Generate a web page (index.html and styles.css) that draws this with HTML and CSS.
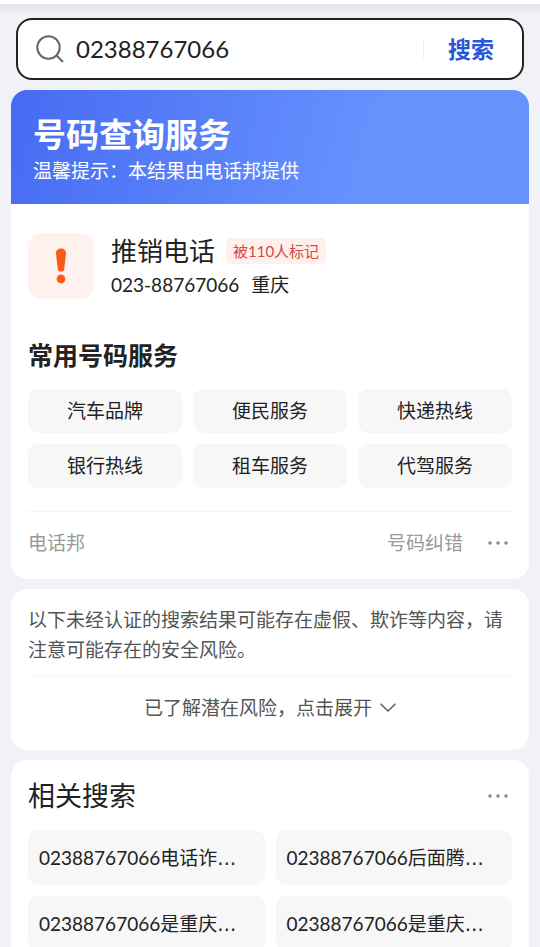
FILE: index.html
```html
<!DOCTYPE html>
<html lang="zh-CN">
<head>
<meta charset="utf-8">
<meta name="viewport" content="width=device-width, initial-scale=1">
<title>02388767066</title>
<link rel="stylesheet" href="styles.css">
</head>
<body>
<div class="page">
  <div class="topbar"></div>
  <form class="search">
    <label class="search-label" for="q" aria-label="搜索">
      <svg class="search-icon" viewBox="0 0 28 28" aria-hidden="true"><circle cx="12.500" cy="12.500" r="11.200"/><path d="M20.500 20.500l6.500 6.500"/></svg>
    </label>
    <input class="search-input" id="q" type="text" value="02388767066">
    <button class="search-button" type="button">搜索</button>
  </form>

  <main class="results">
    <section class="card">
      <header class="banner">
        <h1 class="banner-title">号码查询服务</h1>
        <p class="banner-note">温馨提示：本结果由电话邦提供</p>
      </header>
      <div class="lookup">
        <div class="caller">
          <div class="caller-icon">
            <svg viewBox="0 0 12 36" aria-hidden="true"><path d="M1 5.500C1 2 3 .5 6 .5s5 1.500 5 5L9.200 21.500Q9 23.500 6 23.500T2.800 21.500Z"/><circle cx="6" cy="31" r="4.400"/></svg>
          </div>
          <div class="caller-info">
            <div class="caller-row"><h2 class="caller-name">推销电话</h2><span class="tag">被110人标记</span></div>
            <p class="caller-number"><span>023-88767066</span><span>重庆</span></p>
          </div>
        </div>
        <h3 class="services-title">常用号码服务</h3>
        <nav class="services">
          <a class="chip" href="#">汽车品牌</a>
          <a class="chip" href="#">便民服务</a>
          <a class="chip" href="#">快递热线</a>
          <a class="chip" href="#">银行热线</a>
          <a class="chip" href="#">租车服务</a>
          <a class="chip" href="#">代驾服务</a>
        </nav>
        <footer class="source">
          <span>电话邦</span>
          <a class="report" href="#">号码纠错</a>
          <button class="more" type="button" aria-label="更多"><svg viewBox="0 0 20 4" aria-hidden="true"><circle cx="2" cy="2" r="1.700"/><circle cx="10" cy="2" r="1.700"/><circle cx="18" cy="2" r="1.700"/></svg></button>
        </footer>
      </div>
    </section>

    <section class="card warning">
      <p class="warning-text">以下未经认证的搜索结果可能存在虚假、欺诈等内容，请注意可能存在的安全风险。</p>
      <button class="expand" type="button">已了解潜在风险，点击展开<svg viewBox="0 0 16 9" aria-hidden="true"><path d="M.5.800L8 8 15.500.800"/></svg></button>
    </section>

    <section class="card related">
      <header class="related-head">
        <h2 class="related-title">相关搜索</h2>
        <button class="more" type="button" aria-label="更多"><svg viewBox="0 0 20 4" aria-hidden="true"><circle cx="2" cy="2" r="1.700"/><circle cx="10" cy="2" r="1.700"/><circle cx="18" cy="2" r="1.700"/></svg></button>
      </header>
      <nav class="related-list">
        <a class="query" href="#">02388767066电话诈<span class="dots">…</span></a>
        <a class="query" href="#">02388767066后面腾<span class="dots">…</span></a>
        <a class="query" href="#">02388767066是重庆<span class="dots">…</span></a>
        <a class="query" href="#">02388767066是重庆<span class="dots">…</span></a>
      </nav>
    </section>
  </main>
</div>
</body>
</html>
```
FILE: styles.css
```css
* { box-sizing: border-box; }

body {
  margin: 0;
  background: #f1f2f7;
  color: #222;
  font: 19px/30px Lato, "Noto Sans CJK SC", sans-serif;
}

h1, h2, h3, p { margin: 0; font-weight: 400; }
a { color: inherit; text-decoration: none; }

button {
  padding: 0;
  border: 0;
  background: none;
  color: inherit;
  font: inherit;
  cursor: pointer;
}

svg { display: block; }

.page { height: 100vh; overflow: hidden; }

.topbar {
  height: 18px;
  background: linear-gradient(#fff 4px, #e0e2e4 4px, #e6e8eb 8px, #f1f2f7 15px);
}

/* Search box */
.search {
  display: flex;
  align-items: center;
  height: 62px;
  margin: 0 16px;
  padding: 0 28px 0 18px;
  border: 2px solid #222;
  border-radius: 16px;
  background: #fff;
}

.search-icon {
  width: 28px;
  height: 28px;
  fill: none;
  stroke: #666;
  stroke-width: 2;
}

.search-input {
  flex: 1;
  min-width: 0;
  padding: 0 0 0 12px;
  border: 0;
  outline: 0;
  background: none;
  color: #222;
  font: 24px/32px Lato, "Noto Sans CJK SC", sans-serif;
}

.search-button {
  padding-left: 24px;
  border-left: 1px solid #f0f0f3;
  color: #2b58d2;
  font-size: 23px;
  font-weight: 700;
  line-height: 20px;
}

/* Cards */
.results {
  display: flex;
  flex-direction: column;
  gap: 10px;
  padding: 10px 11px;
}

.card {
  border-radius: 16px;
  background: #fff;
  overflow: hidden;
}

.banner {
  height: 114px;
  padding: 24px 22px 0;
  background: linear-gradient(105deg, #466bf2, #6692fe 68%);
  color: #fff;
}

.banner-title { font-size: 33px; font-weight: 700; line-height: 40px; }
.banner-note { line-height: 34px; }

.lookup { padding: 29px 17px 0; }

.caller { display: flex; gap: 17px; }

.caller-icon {
  display: grid;
  place-items: center;
  width: 66px;
  height: 66px;
  border-radius: 14px;
  background: #fff2ee;
}

.caller-icon svg { width: 12px; height: 36px; fill: #fb5a18; }

.caller-row { display: flex; align-items: center; gap: 11px; height: 36px; }
.caller-name { font-size: 26px; }

.tag {
  padding: 0 7px;
  border-radius: 5px;
  background: #fff0ee;
  color: #d34a43;
  font-size: 15px;
  line-height: 26px;
}

.caller-number { display: flex; gap: 12px; line-height: 32px; }

.services-title {
  margin: 34px 0 14px;
  font-size: 25px;
  font-weight: 700;
  line-height: 40px;
}

.services { display: grid; grid-template-columns: repeat(3, 1fr); gap: 11px; }

.chip {
  border-radius: 10px;
  background: #f7f7f7;
  line-height: 44px;
  text-align: center;
}

.source {
  display: flex;
  align-items: center;
  height: 68px;
  margin-top: 23px;
  padding-bottom: 6px;
  border-top: 1px solid #f4f4f4;
  color: #999;
}

.report { margin-left: auto; }

.more { padding: 8px 4px 8px 25px; }
.more svg { width: 20px; height: 4px; fill: #858585; }

/* Risk notice */
.warning { padding: 16px 17px 0; color: #555; }
.warning-text { padding-bottom: 11px; }

.expand {
  display: flex;
  align-items: center;
  justify-content: center;
  gap: 8px;
  width: 100%;
  height: 74px;
  padding-bottom: 12px;
  border-top: 1px solid #f4f4f4;
}

.expand svg { width: 16px; height: 9px; fill: none; stroke: #555; stroke-width: 1.3; }

/* Related searches */
.related { padding: 16px 17px; }

.related-head {
  display: flex;
  align-items: center;
  justify-content: space-between;
  height: 40px;
  margin-bottom: 14px;
}

.related-title { font-size: 27px; }

.related-list { display: grid; grid-template-columns: repeat(2, 1fr); gap: 11px; }

.query {
  height: 55px;
  padding: 0 11px;
  border-radius: 10px;
  background: #f7f7f7;
  line-height: 55px;
  white-space: nowrap;
  overflow: hidden;
}

.dots { font-family: "DejaVu Sans", sans-serif; }
```
